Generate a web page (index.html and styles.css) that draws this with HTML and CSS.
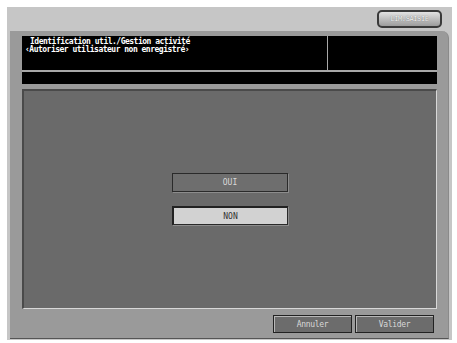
FILE: index.html
```html
<!DOCTYPE html>
<html lang="fr">
<head>
  <meta charset="UTF-8">
  <meta name="viewport" content="width=device-width, initial-scale=1.0">
  <link rel="stylesheet" href="styles.css">
</head>
<body>

<div class="screen">
  <div class="topbar">
    <div class="top-btn">LIM.SAISIE</div>
  </div>

  <div class="frame">
    <div class="header">
      <div class="title-row">
        <div class="title-cell">
          <div class="title-line first">Identification util./Gestion activité</div>
          <div class="title-line">‹Autoriser utilisateur non enregistré›</div>
        </div>
        <div class="side-cell"></div>
      </div>
      <div class="msg-row"></div>
    </div>

    <div class="content">
      <div class="choice">OUI</div>
      <div class="choice selected">NON</div>
    </div>

    <div class="footer">
      <div class="foot-btn">Annuler</div>
      <div class="foot-btn">Valider</div>
    </div>
  </div>
</div>

</body>
</html>
```

FILE: styles.css
```css
body {
  margin: 0;
  background-color: #fff;
  font-family: 'DejaVu Sans Mono', monospace;
}

.screen {
  margin: 7px 0 0 7px;
  width: 445px;
  height: 333px;
  background-color: #c6c6c6;
  display: flex;
  flex-direction: column;
}

.topbar {
  height: 24px;
  display: flex;
  justify-content: flex-end;
  align-items: flex-start;
  padding-right: 10px;
  box-sizing: border-box;
}

.top-btn {
  margin-top: 3px;
  width: 65px;
  height: 18px;
  box-sizing: border-box;
  border: 2px solid #3a3a3a;
  border-radius: 5px;
  background: linear-gradient(#e2e2e2, #9c9c9c);
  color: #f4f4f4;
  font-size: 7px;
  letter-spacing: -0.4px;
  display: flex;
  justify-content: center;
  align-items: center;
  overflow: hidden;
  white-space: nowrap;
  text-shadow: 0 0 1px #555;
}

.frame {
  margin-left: 3px;
  width: 439px;
  height: 308px;
  background-color: #9a9a9a;
  border-top-right-radius: 7px;
  border-right: 1px solid #8a8a8a;
  border-bottom: 1px solid #555;
  box-sizing: border-box;
  padding: 5px 11px 0 12px;
  display: flex;
  flex-direction: column;
}

.header {
  background-color: #000;
  display: flex;
  flex-direction: column;
}

.title-row {
  height: 34px;
  display: flex;
  border-bottom: 2px solid #a8a8a8;
}

.title-cell {
  width: 306px;
  box-sizing: border-box;
  border-right: 1px solid #a8a8a8;
  padding: 2px 0 0 3px;
}

.title-line {
  color: #fff;
  font-size: 8px;
  font-weight: bold;
  line-height: 8px;
  letter-spacing: -0.5px;
}

.title-line.first {
  padding-left: 5px;
}

.side-cell {
  flex: 1;
}

.msg-row {
  height: 12px;
}

.content {
  margin-top: 5px;
  height: 220px;
  width: 415px;
  box-sizing: border-box;
  background-color: #6a6a6a;
  border-top: 2px solid #4a4a4a;
  border-left: 2px solid #4a4a4a;
  border-right: 1px solid #d8d8d8;
  border-bottom: 1px solid #d8d8d8;
  display: flex;
  flex-direction: column;
  align-items: center;
  padding-top: 82px;
  gap: 14px;
}

.choice {
  width: 116px;
  height: 19px;
  box-sizing: border-box;
  border: 1px solid #2a2a2a;
  box-shadow: 1px 1px 0 #8c8c8c;
  background-color: #6e6e6e;
  color: #d8d8d8;
  font-size: 8px;
  display: flex;
  justify-content: center;
  align-items: center;
}

.choice.selected {
  background-color: #d2d2d2;
  color: #333;
  border-top: 2px solid #222;
  border-left: 2px solid #222;
}

.footer {
  display: flex;
  justify-content: flex-end;
  gap: 3px;
  margin-top: 6px;
  padding-right: 3px;
}

.foot-btn {
  width: 79px;
  height: 18px;
  box-sizing: border-box;
  background-color: #6c6c6c;
  border: 1px solid #222;
  box-shadow: inset 1px 1px 0 #b8b8b8;
  color: #d8d8d8;
  font-size: 8px;
  letter-spacing: -0.3px;
  display: flex;
  justify-content: center;
  align-items: center;
}
```
